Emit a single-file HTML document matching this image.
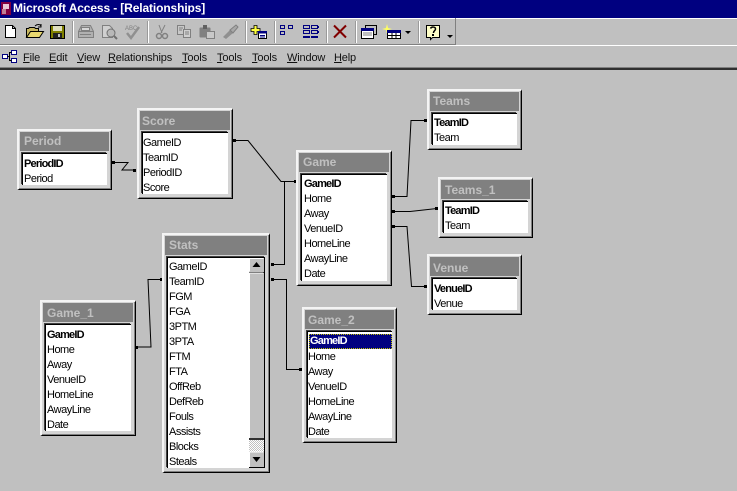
<!DOCTYPE html>
<html><head><meta charset="utf-8"><style>
html,body{margin:0;padding:0}
body{width:737px;height:491px;overflow:hidden;background:#c0c0c0;position:relative;font-family:"Liberation Sans",sans-serif;color:#000}
.tb{position:absolute;left:0;top:0;width:737px;height:18px;background:#000080;color:#fff;font:bold 12px/17px "Liberation Sans",sans-serif;letter-spacing:-.12px}
.tb span{position:absolute;left:13px;top:0}
.bar{position:absolute;left:0;top:18px;width:456px;height:27px;border-right:1px solid #808080;border-bottom:1px solid #808080;box-sizing:border-box}
.full{position:absolute;left:0;top:18px;width:737px;height:1px;background:#fff}
.sep{position:absolute;top:21px;width:1px;height:22px;background:#9a9a9a;border-right:1px solid #fff}
.hl{position:absolute;left:0;width:737px;height:1px}
.m{position:absolute;top:51px;font-size:11px;line-height:14px;letter-spacing:-.15px;color:#111}
.m u{text-decoration:underline}
.t{position:absolute;box-sizing:border-box;background:#d4d4d4;border-style:solid;border-width:2px 1px 1px 2px;border-color:#f4f4f4 #000 #000 #f4f4f4;padding:1px 2px 2px 1px;box-shadow:inset -1px -1px 0 #808080}
.h{height:19px;background:#808080;color:#c0c0c0;font:bold 12px/19px "Liberation Sans",sans-serif;padding-left:4px}
.l{position:absolute;left:3px;right:4px;top:22px;bottom:4px;background:#fff;border-top:1px solid #000;border-left:1px solid #000;box-shadow:-1px -1px 0 #404040;padding:3px 0 0 1px;font-size:11px;line-height:15px;letter-spacing:-.5px;white-space:nowrap;overflow:hidden}
.l b{letter-spacing:-.8px;display:block}
.l div{height:15px}
</style></head><body>
<div class="tb"><span>Microsoft Access - [Relationships]</span></div>
<svg style="position:absolute;left:0;top:0" width="13" height="18"><rect x="1" y="2" width="10" height="13" fill="#fff"/><rect x="1" y="2" width="10" height="13" fill="#800040"/><rect x="3" y="4" width="6" height="5" fill="#e8c8d8"/><rect x="2" y="9" width="4" height="5" fill="#c08098"/></svg>
<div class="full"></div>
<div class="bar"></div>
<div class="sep" style="left:72px"></div><div class="sep" style="left:147px"></div><div class="sep" style="left:245px"></div><div class="sep" style="left:274px"></div><div class="sep" style="left:326px"></div><div class="sep" style="left:355px"></div><div class="sep" style="left:418px"></div>

<svg style="position:absolute;left:0;top:18px" width="456" height="27" viewBox="0 18 456 27">
<path d="M5.5 25.5h7l3 3v9h-10z" fill="#fff" stroke="#000"/><path d="M12.5 25.5v3h3" fill="none" stroke="#000"/>
<path d="M26.5 37.5v-9h2l1-1h5l1 1h3v9z" fill="#c8b860" stroke="#000"/><path d="M26.5 37.5l4-6h13l-4 6z" fill="#e8d870" stroke="#000"/><path d="M35 26c2-2 5-2 6 0M41 24v3h-3" fill="none" stroke="#000"/>
<rect x="50.5" y="25.5" width="14" height="13" fill="#808000" stroke="#000"/><rect x="53" y="26" width="9" height="5" fill="#e0e0c0"/><rect x="53" y="33" width="9" height="5" fill="#202020"/><rect x="58" y="34" width="2" height="3" fill="#c0c0c0"/>
<g fill="#a0a0a0" stroke="#808080"><path d="M81.5 25.5h9l3 6v6h-15v-6z" fill="#b0b0b0"/><path d="M78.5 31.5h15M80 34.500h11" fill="none"/><rect x="81.500" y="27.500" width="8" height="3" fill="#d8d8d8"/></g>
<path d="M102.500 25.500h7l3 3v9h-10z" fill="#d0d0d0" stroke="#808080"/><circle cx="111" cy="33" r="4" fill="#b8b8b8" stroke="#707070"/><path d="M114 36l3 3" stroke="#707070" stroke-width="2"/>
<text x="125" y="30" font-family="Liberation Sans" font-size="6" fill="#808080">ABC</text><path d="M127 33l4 5 8-11" fill="none" stroke="#909090" stroke-width="2.500"/>
<path d="M159 25l3 8M165 25l-4 8" stroke="#808080" fill="none"/><circle cx="159" cy="36" r="2.500" fill="none" stroke="#808080" stroke-width="1.500"/><circle cx="165" cy="36" r="2.500" fill="none" stroke="#808080" stroke-width="1.500"/>
<path d="M177.500 25.500h7v9h-7z" fill="#c8c8c8" stroke="#808080"/><path d="M183.500 29.500h7v8h-7z" fill="#d0d0d0" stroke="#808080"/><path d="M179 28h4M179 30h3M185 32h4M185 34h4" stroke="#808080"/>
<rect x="199.500" y="27.500" width="11" height="10" rx="1" fill="#808080"/><rect x="203" y="25" width="4" height="4" fill="#606060"/><rect x="206.500" y="31.500" width="8" height="7" fill="#c8c8c8" stroke="#808080"/>
<path d="M223 37l7-7 3 3-7 6z" fill="#909090"/><path d="M230 30l6-5 2 2-5 6z" fill="#a8a8a8" stroke="#808080"/>
<path d="M254 25.500h3v3h3v3h-3v3h-3v-3h-3v-3h3z" fill="#ffff40" stroke="#000" stroke-width=".8"/><rect x="258.500" y="31.500" width="8" height="7" fill="#fff" stroke="#000"/><rect x="258" y="31" width="9" height="2.500" fill="#000080"/><path d="M260 35.500h5M260 37h5" stroke="#000080"/>
<g fill="none" stroke="#000080"><rect x="280.500" y="25.500" width="4" height="3" stroke-width="1"/><rect x="288.500" y="25.500" width="4" height="3"/><rect x="280.500" y="31.500" width="4" height="3"/></g><path d="M280 25h5v1h-5zM288 25h5v1h-5zM280 31h5v1h-5z" fill="#000080"/>
<g fill="none" stroke="#000080"><rect x="303.500" y="25.500" width="6" height="3"/><rect x="311.500" y="25.500" width="6" height="3"/><rect x="303.500" y="30.500" width="6" height="3"/><rect x="311.500" y="30.500" width="6" height="3"/></g><path d="M303 36h7v2h-7zM311 36h7v2h-7zM318 26h1v2h-1zM318 31h1v2h-1z" fill="#000080"/>
<path d="M334 25.500l12 12M346 25.500l-12 12" stroke="#800000" stroke-width="2" fill="none"/>
<rect x="365.500" y="25.500" width="11" height="9" fill="#c0c0c0" stroke="#000"/><rect x="361.500" y="28.500" width="12" height="10" fill="#fff" stroke="#000"/><rect x="361" y="28" width="13" height="3" fill="#000080"/><path d="M363 33h9M363 35h9" stroke="#808080"/>
<path d="M387 24l1 4 4 1-4 1-1 4-1-4-4-1 4-1z" fill="#ffff60"/><rect x="387.500" y="30.500" width="13" height="8" fill="#fff" stroke="#000"/><rect x="387" y="30" width="14" height="3" fill="#000080"/><path d="M392 33v5M396 33v5M388 35.500h12" stroke="#000"/>
<path d="M405 31h6l-3 3z" fill="#000"/>
<path d="M426.500 25.500h13v12h-7l-2 2v-2h-4z" fill="#ffffc8" stroke="#000" stroke-width="1"/><path d="M430.500 28.500c1-2 5-2 5 .5 0 2-2 1.500-2 4" fill="none" stroke="#000" stroke-width="1.500"/><rect x="432" y="34" width="2" height="2" fill="#000"/>
<path d="M447 35h6l-3 3z" fill="#000"/>
</svg>

<div class="hl" style="top:45px;background:#fff"></div>
<svg style="position:absolute;left:0;top:48px" width="20" height="18" viewBox="0 48 20 18"><g fill="#fff" stroke="#000080"><rect x="2.500" y="54.500" width="5" height="4"/><rect x="11.500" y="50.500" width="5" height="4"/><rect x="11.500" y="58.500" width="5" height="4"/></g><path d="M7.500 56.500h2v-4h2M9.500 56.500v4h2" fill="none" stroke="#000"/></svg>
<div class="m" style="left:23px"><u>F</u>ile</div>
<div class="m" style="left:49px"><u>E</u>dit</div>
<div class="m" style="left:77px"><u>V</u>iew</div>
<div class="m" style="left:108px"><u>R</u>elationships</div>
<div class="m" style="left:182px"><u>T</u>ools</div>
<div class="m" style="left:217px"><u>T</u>ools</div>
<div class="m" style="left:252px"><u>T</u>ools</div>
<div class="m" style="left:287px"><u>W</u>indow</div>
<div class="m" style="left:334px"><u>H</u>elp</div>
<div class="hl" style="top:67px;background:#808080"></div>
<div class="hl" style="top:68px;height:2px;background:#303030"></div>

<svg style="position:absolute;left:0;top:0" width="737" height="491"><g fill="none" stroke="#000" stroke-width="1">
<path d="M112 162.500h16l-6 7.500h13"/>
<path d="M233 140.500h15l33 41h15M284.500 181v83.500h-13"/>
<path d="M272 279.500h14.500v90h15"/>
<path d="M161 279.500h-13l3 67.500h-15"/>
<path d="M392 196.500h15l4-76h15"/>
<path d="M392 211.500h18l27-3"/>
<path d="M392 226.500h15l4.500 60h15"/>
</g><g fill="#000"><rect x="112" y="161" width="3" height="3"/><rect x="133" y="169" width="3" height="3"/><rect x="233" y="139" width="3" height="3"/><rect x="294" y="180" width="3" height="3"/><rect x="271" y="263" width="3" height="3"/><rect x="271" y="278" width="3" height="3"/><rect x="299" y="368" width="3" height="3"/><rect x="160" y="278" width="3" height="3"/><rect x="135" y="346" width="3" height="3"/><rect x="392" y="195" width="3" height="3"/><rect x="424" y="119" width="3" height="3"/><rect x="392" y="210" width="3" height="3"/><rect x="435" y="207" width="3" height="3"/><rect x="392" y="225" width="3" height="3"/><rect x="424" y="285" width="3" height="3"/></g></svg>

<div class="t" style="left:17px;top:129px;width:95px;height:61px"><div class="h">Period</div><div class="l"><b>PeriodID</b><div>Period</div></div></div>
<div class="t" style="left:137px;top:108px;width:96px;height:91px"><div class="h" style="line-height:20px;padding-left:2px">Score</div><div class="l" style="padding-left:0"><div>GameID</div><div>TeamID</div><div>PeriodID</div><div>Score</div></div></div>
<div class="t" style="left:296px;top:150px;width:96px;height:136px"><div class="h">Game</div><div class="l" style="padding:2px 0 0 2px"><b>GameID</b><div>Home</div><div>Away</div><div>VenueID</div><div>HomeLine</div><div>AwayLine</div><div>Date</div></div></div>
<div class="t" style="left:427px;top:89px;width:95px;height:61px"><div class="h" style="padding-left:3px">Teams</div><div class="l" style="padding-top:2px"><b>TeamID</b><div>Team</div></div></div>
<div class="t" style="left:438px;top:177px;width:95px;height:61px"><div class="h" style="line-height:20px">Teams_1</div><div class="l" style="padding-top:2px"><b>TeamID</b><div>Team</div></div></div>
<div class="t" style="left:427px;top:254px;width:95px;height:61px"><div class="h" style="line-height:22px;padding-left:3px">Venue</div><div class="l"><b>VenueID</b><div>Venue</div></div></div>
<div class="t" style="left:40px;top:300px;width:96px;height:136px"><div class="h" style="line-height:21px">Game_1</div><div class="l"><b>GameID</b><div>Home</div><div>Away</div><div>VenueID</div><div>HomeLine</div><div>AwayLine</div><div>Date</div></div></div>
<div class="t" style="left:302px;top:307px;width:95px;height:136px"><div class="h" style="line-height:21px;padding-left:3px">Game_2</div><div class="l" style="padding-left:0"><b style="background:#000080;color:#fff;outline:1px dotted #c0c000;outline-offset:-1px;margin:-1px 0 1px 1px;height:15px;padding-left:1px">GameID</b><div>Home</div><div>Away</div><div>VenueID</div><div>HomeLine</div><div>AwayLine</div><div>Date</div></div></div>
<div class="t" style="left:162px;top:233px;width:108px;height:240px"><div class="h">Stats</div><div class="l" style="padding-top:2px"><div>GameID</div><div>TeamID</div><div>FGM</div><div>FGA</div><div>3PTM</div><div>3PTA</div><div>FTM</div><div>FTA</div><div>OffReb</div><div>DefReb</div><div>Fouls</div><div>Assists</div><div>Blocks</div><div>Steals</div></div></div>

<svg style="position:absolute;left:249px;top:258px" width="16" height="210" viewBox="249 258 16 210">
<defs><pattern id="d" width="2" height="2" patternUnits="userSpaceOnUse"><rect width="2" height="2" fill="#fff"/><rect width="1" height="1" fill="#c0c0c0"/><rect x="1" y="1" width="1" height="1" fill="#c0c0c0"/></pattern></defs>
<rect x="249" y="258" width="15" height="210" fill="#c0c0c0"/>
<path d="M264.500 258v210" stroke="#000"/>
<rect x="249" y="258" width="15" height="14" fill="#c0c0c0"/><path d="M249.500 271.500v-13h14" fill="none" stroke="#fff"/><path d="M249 272.500h15" stroke="#000"/>
<path d="M256.500 262l4 5h-8z" fill="#000"/>
<rect x="249" y="273" width="15" height="165" fill="#c0c0c0"/><path d="M249.500 438v-165h14" fill="none" stroke="#fff"/><path d="M249 439h15" stroke="#000" stroke-width="1.500"/>
<rect x="249" y="440" width="15" height="12" fill="url(#d)"/>
<rect x="249" y="452" width="15" height="15" fill="#c0c0c0"/><path d="M249.500 467v-15h14" fill="none" stroke="#fff"/><path d="M249 467.500h15" stroke="#000"/>
<path d="M252.500 457h8l-4 5z" fill="#000"/>
</svg>
</body></html>
